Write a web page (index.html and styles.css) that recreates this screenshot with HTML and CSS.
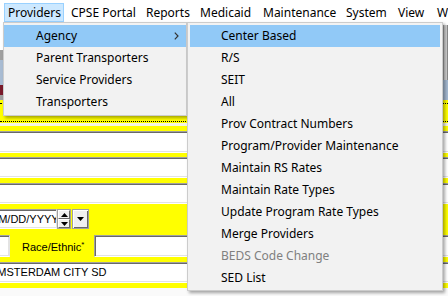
FILE: index.html
```html
<!DOCTYPE html>
<html>
<head>
<meta charset="utf-8">
<link rel="stylesheet" href="styles.css">
</head>
<body>
<div class="screen">
  <div class="menubar">
    <div class="mb-item mb-hot">Providers</div>
    <div class="mb-item w-cpse">CPSE Portal</div>
    <div class="mb-item w-reports">Reports</div>
    <div class="mb-item w-medicaid">Medicaid</div>
    <div class="mb-item w-maint">Maintenance</div>
    <div class="mb-item w-system">System</div>
    <div class="mb-item w-view">View</div>
    <div class="mb-item w-window">Window</div>
  </div>

  <div class="form">
    <div class="topzone">
      <div class="topmain">
        <div class="t-white"></div>
        <div class="t-gray"></div>
        <div class="t-blue"></div>
        <div class="t-red"></div>
        <div class="t-gray2"></div>
      </div>
      <div class="topside">
        <div class="s-white"></div>
        <div class="s-scroll"></div>
        <div class="s-blue"></div>
      </div>
    </div>
    <div class="y-dots"><div class="dots"></div></div>
    <div class="w-gap"></div>
    <div class="y-5"></div>
    <div class="field f22"></div>
    <div class="y-4"></div>
    <div class="field f21"></div>
    <div class="y-5"></div>
    <div class="field f21"></div>
    <div class="y-block">
      <div class="date-row">
        <div class="date-box"><span class="date-text">MM/DD/YYYY</span></div>
        <div class="spinner">
          <div class="spin-btn"><svg width="7" height="4" viewBox="0 0 7 4"><path d="M0 4 L3.5 0 L7 4 Z" fill="#000"/></svg></div>
          <div class="spin-btn"><svg width="7" height="4" viewBox="0 0 7 4"><path d="M0 0 L3.5 4 L7 0 Z" fill="#000"/></svg></div>
        </div>
        <div class="drop-btn"><svg width="7" height="4" viewBox="0 0 7 4"><path d="M0 0 L3.5 4 L7 0 Z" fill="#000"/></svg></div>
      </div>
      <div class="race-row">
        <div class="small-box"></div>
        <div class="race-label">Race/Ethnic<sup>*</sup></div>
        <div class="race-box"></div>
      </div>
    </div>
    <div class="field f21 district"><span class="district-text">AMSTERDAM CITY SD</span></div>
    <div class="y-5"></div>
    <div class="bottom"></div>
  </div>

  <div class="menu menu1">
    <div class="mi mi-hot"><span>Agency</span><svg class="chev" width="5" height="8" viewBox="0 0 5 8"><path d="M0.8 0.6 L4 4 L0.8 7.4" fill="none" stroke="#333" stroke-width="1.2"/></svg></div>
    <div class="mi">Parent Transporters</div>
    <div class="mi">Service Providers</div>
    <div class="mi">Transporters</div>
  </div>

  <div class="menu menu2">
    <div class="mi mi-hot">Center Based</div>
    <div class="mi">R/S</div>
    <div class="mi">SEIT</div>
    <div class="mi">All</div>
    <div class="mi">Prov Contract Numbers</div>
    <div class="mi">Program/Provider Maintenance</div>
    <div class="mi">Maintain RS Rates</div>
    <div class="mi">Maintain Rate Types</div>
    <div class="mi">Update Program Rate Types</div>
    <div class="mi">Merge Providers</div>
    <div class="mi mi-dis">BEDS Code Change</div>
    <div class="mi">SED List</div>
  </div>
</div>
</body>
</html>
```

FILE: styles.css
```css
* { box-sizing: border-box; }
html, body { margin: 0; padding: 0; }
body { width: 448px; height: 296px; overflow: hidden; background: #fafafa; }
.screen {
  position: relative;
  width: 448px;
  height: 296px;
  overflow: hidden;
  font-family: "Noto Sans", "Open Sans", sans-serif;
  font-size: 12px;
  color: #000;
}

/* menubar */
.menubar {
  height: 22px;
  background: #fff;
  display: flex;
  padding: 3px 0 0 4px;
  white-space: nowrap;
  overflow: hidden;
}
.mb-item {
  height: 19px;
  line-height: 17px;
  border: 1px solid transparent;
  padding-left: 6px;
  flex: none;
  overflow: hidden;
}
.mb-hot { width: 60px; padding-left: 3px; background: #cce8ff; border-color: #99d1ff; }
.w-cpse { width: 75px; }
.w-reports { width: 54px; }
.w-medicaid { width: 63px; }
.w-maint { width: 83px; }
.w-system { width: 52px; }
.w-view { width: 39px; }
.w-window { width: 60px; }

/* background form */
.form { font-family: "Liberation Sans", Arial, sans-serif; font-size: 11px; }
.topzone { display: flex; height: 78px; }
.topmain { flex: 1; }
.t-white { height: 28px; background: #fff; }
.t-gray { height: 10px; background: #a0a0a0; }
.t-blue { height: 25px; background: #a9bcd3; }
.t-red { height: 10px; background: #7a1a2a; }
.t-gray2 { height: 5px; background: #a0a0a0; }
.topside { width: 5px; }
.s-white { height: 3px; background: #fff; }
.s-scroll { height: 55px; background: #cdcdcd; border-left: 1px solid #a0a0a0; border-right: 1px solid #888; }
.s-blue { height: 20px; background: #a3b7cf; }

.y-dots { height: 23px; background: #ffff00; padding-top: 3px; }
.dots { height: 19px; border-top: 1px dotted #000; border-bottom: 1px dotted #000; }
.w-gap { height: 3px; background: #f4f4e0; }
.y-5 { height: 5px; background: #ffff00; }
.y-4 { height: 4px; background: #ffff00; }

.field {
  margin-left: -4px;
  width: calc(100% + 8px);
  background: #fff;
  border-top: 1px solid #a0a0a0;
  border-bottom: 1px solid #fff;
  box-shadow: inset 0 1px 0 #696969, inset 0 -1px 0 #e3e3e3;
}
.f22 { height: 22px; }
.f21 { height: 21px; }

.y-block { height: 58px; background: #ffff00; padding-top: 5px; }
.date-row { display: flex; height: 20px; }
.date-box {
  width: 61px; height: 20px; margin-left: -4px; flex: none;
  background: #fff;
  border-top: 1px solid #a0a0a0;
  border-right: 1px solid #e3e3e3;
  border-bottom: 1px solid #fff;
  box-shadow: inset 0 1px 0 #696969, inset 0 -1px 0 #e3e3e3;
  overflow: hidden;
  white-space: nowrap;
  line-height: 18px;
}
.date-text { display: inline-block; margin-left: -7px; }
.spinner {
  width: 14px; height: 20px; flex: none;
  display: flex; flex-direction: column;
  border: 1px solid #a0a0a0;
  background: #a0a0a0;
}
.spin-btn {
  height: 9px;
  background: #f0f0f0;
  border-top: 1px solid #fff;
  border-left: 1px solid #fff;
  border-bottom: 1px solid #696969;
  border-right: 1px solid #696969;
  display: flex; align-items: center; justify-content: center;
}
.drop-btn {
  width: 17px; height: 20px; margin-left: 1px; flex: none;
  background: #f0f0f0;
  border: 1px solid #a0a0a0;
  box-shadow: inset 1px 1px 0 #fff, inset -1px -1px 0 #696969;
  display: flex; align-items: center; justify-content: center;
}
.race-row { display: flex; height: 22px; margin-top: 6px; align-items: center; }
.small-box, .race-box {
  height: 22px; background: #fff; flex: none;
  border-top: 1px solid #a0a0a0;
  border-left: 1px solid #a0a0a0;
  border-bottom: 1px solid #fff;
  border-right: 1px solid #e3e3e3;
  box-shadow: inset 1px 1px 0 #696969, inset -1px -1px 0 #e3e3e3;
}
.small-box { width: 16px; margin-left: -6px; }
.race-label { width: 84px; flex: none; padding-left: 12px; white-space: nowrap; }
.race-label sup { font-size: 8px; vertical-align: 4px; }
.race-box { width: 400px; }

.district { white-space: nowrap; overflow: hidden; line-height: 19px; }
.district-text { display: inline-block; margin-left: -6px; }
.bottom { height: 8px; background: #fafafa; }

/* popup menus */
.menu {
  position: absolute;
  top: 22px;
  background: #f2f2f2;
  border: 1px solid #cccccc;
  box-shadow: 2px 2px 3px rgba(0, 0, 0, 0.35);
  white-space: nowrap;
}
.menu1 { left: 3px; width: 184px; padding: 2px 0 2px 0; }
.menu2 { left: 187px; width: 256px; padding: 2px 2px 1px 2px; }
.mi {
  height: 22px;
  line-height: 22px;
  display: flex;
  align-items: center;
  justify-content: space-between;
}
.menu1 .mi { padding-left: 32px; }
.menu2 .mi { padding-left: 31px; }
.mi-hot { background: #91c9f7; }
.mi-dis { color: #808080; }
.chev { margin-right: 7px; }
```
